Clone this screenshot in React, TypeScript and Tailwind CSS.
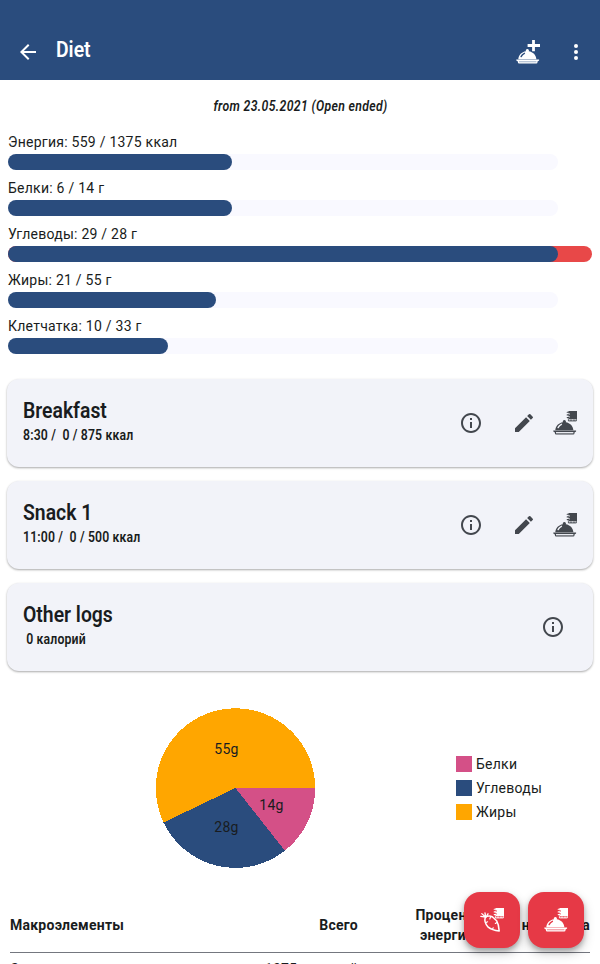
import React from "react";

function Cloche() {
  return (
    <g>
      <path d="M2.3 19.2C2.6 14.8 5.8 11.8 9.9 11.2a1.6 1.6 0 1 1 2.9 0c4.100 .6 7.300 3.600 7.600 8Z" fill="currentColor" />
      <path d="M5.100 16.600a6.500 6.500 0 0 1 3.300-3.300" fill="none" stroke="var(--cut)" strokeWidth="1.400" strokeLinecap="round" />
      <path d="M.3 19.600h22.800v1l-1.600 1v.6q0 1.300-1.300 1.300H3.200q-1.300 0-1.300-1.300v-.6l-1.600-1Z" fill="currentColor" />
      <path d="M3 21.700h17.400" stroke="var(--slot)" strokeWidth="1.300" />
    </g>
  );
}

function Notebook() {
  return (
    <g>
      <path d="M15.500 0h8.500v8.300h-8.500V6.800h1.500V5.500h-1.500V3.800h1.500V2.500h-1.500Z" fill="currentColor" />
      <path d="M14.200 1.200h2M14.200 3.900h2M14.200 6.600h2" stroke="currentColor" strokeWidth="1.100" strokeLinecap="round" />
      <path d="M15.400 8.300v1.600h7.900v-1.600M18 10v-1.500M21 10v-1.500" fill="none" stroke="currentColor" strokeWidth="1" />
    </g>
  );
}

function MealLogIcon() {
  return (
    <svg viewBox="0 0 24 24" className="size-6 shrink-0">
      <Cloche />
      <Notebook />
    </svg>
  );
}

function CarrotLogIcon() {
  return (
    <svg viewBox="0 0 24 24" className="size-6">
      <Notebook />
      <path d="M5.300 9.300Q8.600 6.700 12.600 9L16.600 12.700Q18.800 16.500 19.200 23 12 22.300 8.200 19.200 3.700 14.500 5.300 9.300Z" fill="none" stroke="currentColor" strokeWidth="1.500" strokeLinejoin="round" />
      <path d="M5.500 9.100.8 8.300M5.400 9 1.800 5.600M5.600 8.800 5 4.800M6.200 8.800 8 5.800" stroke="currentColor" strokeWidth="1.300" strokeLinecap="round" />
      <path d="M5.600 14.800l2-1M10.500 9l-.7 2M12.500 21.200l.7-1.500M17 14.500l-1.700 1" stroke="currentColor" strokeWidth="1.100" strokeLinecap="round" />
    </svg>
  );
}

function InfoIcon() {
  return (
    <svg viewBox="0 0 24 24" className="size-6 shrink-0 fill-current">
      <path d="M11 7h2v2h-2V7zm0 4h2v6h-2v-6zm1-9C6.48 2 2 6.48 2 12s4.48 10 10 10 10-4.48 10-10S17.52 2 12 2zm0 18c-4.41 0-8-3.59-8-8s3.59-8 8-8 8 3.59 8 8-3.59 8-8 8z" />
    </svg>
  );
}

function EditIcon() {
  return (
    <svg viewBox="0 0 24 24" className="size-6 shrink-0 fill-current">
      <path d="M3 17.25V21h3.75L17.81 9.94l-3.75-3.75L3 17.25zM20.71 7.04a.996.996 0 0 0 0-1.41l-2.34-2.34a.996.996 0 0 0-1.41 0l-1.83 1.83 3.75 3.75 1.83-1.83z" />
    </svg>
  );
}

const goals = [
  { text: "Энергия: 559 / 1375 ккал", fill: "w-[224px]", over: false },
  { text: "Белки: 6 / 14 г", fill: "w-[224px]", over: false },
  { text: "Углеводы: 29 / 28 г", fill: "w-[550px]", over: true },
  { text: "Жиры: 21 / 55 г", fill: "w-[208px]", over: false },
  { text: "Клетчатка: 10 / 33 г", fill: "w-[160px]", over: false },
];

const meals = [
  { title: "Breakfast", sub: "8:30 /  0 / 875 ккал", editable: true },
  { title: "Snack 1", sub: "11:00 /  0 / 500 ккал", editable: true },
  { title: "Other logs", sub: " 0 калорий", editable: false },
];

const legend = [
  { name: "Белки", color: "bg-[#d45087]" },
  { name: "Углеводы", color: "bg-[#2a4c7d]" },
  { name: "Жиры", color: "bg-[#ffa600]" },
];

export default function App() {
  return (
    <div className="relative h-[964px] w-[600px] overflow-hidden bg-white font-['Roboto',sans-serif] text-sm leading-5 tracking-[0.25px] text-[#191c20]">
      <header className="flex h-20 items-start bg-[#2a4c7d] pt-6 pr-3 pl-4 text-white">
        <svg viewBox="0 0 24 24" className="mt-4 size-6 fill-current">
          <path d="M20 11H7.83l5.59-5.59L12 4l-8 8 8 8 1.41-1.41L7.83 13H20v-2z" />
        </svg>
        <h1 className="mt-3 ml-4 origin-left scale-x-[0.88] text-[22px] leading-7 font-semibold tracking-normal">Diet</h1>
        <svg viewBox="0 0 24 24" className="mt-4 ml-auto size-6 [--cut:#2a4c7d] [--slot:#b5c2d4]">
          <Cloche />
          <path d="M17.500 0v11.200M11.600 5.500H24" stroke="currentColor" strokeWidth="2.800" />
        </svg>
        <svg viewBox="0 0 24 24" className="mt-4 ml-6 size-6 fill-current">
          <circle cx="12" cy="6" r="2" />
          <circle cx="12" cy="12" r="2" />
          <circle cx="12" cy="18" r="2" />
        </svg>
      </header>

      <p className="mt-4 flex h-5 justify-center">
        <span className="scale-x-[0.875] pl-px font-semibold tracking-[0.4px] whitespace-nowrap italic">from 23.05.2021 (Open ended)</span>
      </p>

      <section className="mt-4 px-2">
        {goals.map((g) => (
          <div key={g.text} className="h-[46px]">
            <div className="h-[22px]">{g.text}</div>
            <div className={`h-4 rounded-full ${g.over ? "bg-[#e84848]" : "w-[550px] bg-[#f9f9ff]"}`}>
              <div className={`h-4 rounded-full bg-[#2a4c7d] ${g.fill}`} />
            </div>
          </div>
        ))}
      </section>

      <section className="mt-[17px] flex flex-col gap-3.5 px-[7px]">
        {meals.map((m) => (
          <article key={m.title} className="flex h-[88px] items-center rounded-xl bg-[#f2f3f9] pr-4 pl-4 text-[#43474e] shadow-[0_1px_2px_rgba(0,0,0,0.25),0_1px_3px_rgba(0,0,0,0.1)] [--cut:#f2f3f9] [--slot:#f2f3f9]">
            <div className="flex-1 pb-1 font-semibold whitespace-pre text-[#191c20]">
              <h2 className="origin-left scale-x-[0.88] text-[22px] leading-7 tracking-normal">{m.title}</h2>
              <div className="origin-left scale-x-[0.875] tracking-[0.18px]">{m.sub}</div>
            </div>
            {m.editable ? (
              <div className="flex items-center">
                <InfoIcon />
                <span className="ml-[29px] flex"><EditIcon /></span>
                <span className="ml-[17px] flex"><MealLogIcon /></span>
              </div>
            ) : (
              <span className="mr-3"><InfoIcon /></span>
            )}
          </article>
        ))}
      </section>

      <section className="mt-9 flex h-[162px] items-center">
        <svg viewBox="0 0 160 160" className="ml-[155px] size-40 font-['Roboto',sans-serif] text-sm" shapeRendering="crispEdges">
          <circle cx="80.500" cy="80" r="79.700" fill="#ffa600" />
          <path d="M80.500 80H160.200A79.700 79.700 0 0 1 129.900 142.700Z" fill="#d45087" />
          <path d="M80.500 80 129.900 142.700A79.700 79.700 0 0 1 8.500 114.500Z" fill="#2a4c7d" />
          <g fill="#191c20" textAnchor="middle">
            <text x="71.500" y="46">55g</text>
            <text x="116.500" y="102">14g</text>
            <text x="71.500" y="124">28g</text>
          </g>
        </svg>
        <div className="mb-px ml-[141px] flex flex-col gap-1">
          {legend.map((l) => (
            <div key={l.name} className="flex h-5 items-center gap-1">
              <span className={`size-4 ${l.color}`} />
              {l.name}
            </div>
          ))}
        </div>
      </section>

      <section className="mx-2.5 mt-[37px]">
        <div className="flex h-[47px] items-center border-b border-[#74777f] pb-2 font-bold">
          <div className="w-[174px]">Макроэлементы</div>
          <div className="w-[174px] text-right">Всего</div>
          <div className="w-[116px] pl-10 text-right">Процент энергии</div>
          <div className="flex-1 text-right whitespace-nowrap">на кг тела</div>
        </div>
        <div className="flex pt-[6px]">
          <div className="w-[174px]">Энергия</div>
          <div className="w-[174px] text-right">1375 калорий</div>
        </div>
      </section>

      <div className="absolute right-4 bottom-4 flex gap-2 text-white [--cut:#e63946] [--slot:#f3a4ab]">
        <button className="flex size-14 items-center justify-center rounded-2xl bg-[#e63946] shadow-[0_3px_5px_rgba(0,0,0,0.25),0_5px_12px_rgba(0,0,0,0.2)]">
          <CarrotLogIcon />
        </button>
        <button className="flex size-14 items-center justify-center rounded-2xl bg-[#e63946] shadow-[0_3px_5px_rgba(0,0,0,0.25),0_5px_12px_rgba(0,0,0,0.2)]">
          <MealLogIcon />
        </button>
      </div>
    </div>
  );
}
